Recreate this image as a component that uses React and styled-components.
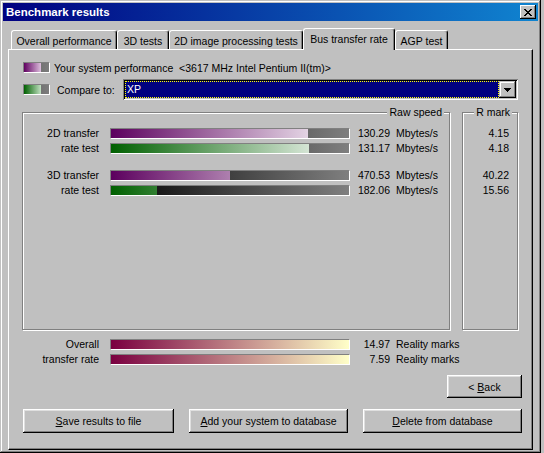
import React from 'react'
import styled, { createGlobalStyle } from 'styled-components'

const Global = createGlobalStyle`
    html, body {
        margin: 0;
        padding: 0;
        background: #c0c0c0;
    }
    body {
        font-family: "Liberation Sans", Arial, sans-serif;
        font-size: 10.5px;
        color: #000;
    }
`;

const Window = styled.div`
    width: 541px;
    height: 453px;
    box-sizing: border-box;
    padding: 3px;
    background: #c0c0c0;
    box-shadow: inset -1px -1px #000, inset 1px 1px #c0c0c0, inset -2px -2px #808080, inset 2px 2px #fff;
    display: flex;
    flex-direction: column;
`;

const TitleBar = styled.div`
    height: 18px;
    display: flex;
    align-items: center;
    justify-content: space-between;
    padding: 0 2px 0 3px;
    background: linear-gradient(to right, #000080, #1084d0);
    color: #fff;
    font-weight: bold;
    font-size: 11.5px;
`;

const CloseBtn = styled.div`
    width: 16px;
    height: 14px;
    box-sizing: border-box;
    background: #c0c0c0;
    box-shadow: inset -1px -1px #000, inset 1px 1px #fff, inset -2px -2px #808080;
    display: flex;
    align-items: center;
    justify-content: center;
    padding-right: 1px;
`;

const Body = styled.div`
    flex: 1;
    display: flex;
    flex-direction: column;
    padding: 7px 5px 0 5px;
`;

const TabStrip = styled.div`
    display: flex;
    align-items: flex-end;
    height: 21px;
    padding-left: 3px;
`;

const Tab = styled.div`
    width: ${p => p.$w}px;
    height: ${p => (p.$active ? 22 : 19)}px;
    margin-bottom: ${p => (p.$active ? -1 : 0)}px;
    position: relative;
    z-index: ${p => (p.$active ? 2 : 0)};
    box-sizing: border-box;
    padding-top: 3px;
    line-height: 15px;
    text-align: center;
    white-space: nowrap;
    background: #c0c0c0;
    border-top: 1px solid #fff;
    border-left: 1px solid #fff;
    border-right: 1px solid #000;
    border-radius: 3px 3px 0 0;
    box-shadow: inset -1px 0 #808080;
`;

const Panel = styled.div`
    flex: 1;
    box-sizing: border-box;
    border-top: 1px solid #fff;
    border-left: 1px solid #fff;
    border-right: 1px solid #000;
    border-bottom: 1px solid #000;
    box-shadow: inset -1px -1px #808080;
    padding: 10px 13px 0 13px;
    display: flex;
    flex-direction: column;
`;

const LegendRow = styled.div`
    display: flex;
    align-items: center;
    height: ${p => p.$h}px;
    margin-top: ${p => p.$top || 0}px;
`;

const Swatch = styled.div`
    width: 27px;
    height: 11px;
    margin-left: 1px;
    box-sizing: border-box;
    border-top: 1px solid #808080;
    border-left: 1px solid #808080;
    border-bottom: 1px solid #fff;
    border-right: 1px solid #fff;
    background: linear-gradient(to right, ${p => p.$from}, ${p => p.$to} 70%, #747474 70%, #7c7c7c);
`;

const LegendText = styled.span`
    margin-left: ${p => p.$gap}px;
    width: ${p => (p.$w ? `${p.$w}px` : 'auto')};
    white-space: pre;
`;

const Combo = styled.div`
    width: 395px;
    height: 21px;
    box-sizing: border-box;
    padding: 2px;
    background: #fff;
    box-shadow: inset 1px 1px #808080, inset -1px -1px #fff, inset 2px 2px #000, inset -2px -2px #c0c0c0;
    display: flex;
`;

const Selection = styled.div`
    flex: 1;
    box-sizing: border-box;
    background: #000080;
    border: 1px dotted #ffff00;
    color: #fff;
    padding-left: 1px;
    line-height: 15px;
`;

const DropBtn = styled.div`
    width: 17px;
    box-sizing: border-box;
    background: #c0c0c0;
    box-shadow: inset -1px -1px #000, inset 1px 1px #c0c0c0, inset -2px -2px #808080, inset 2px 2px #fff;
    display: flex;
    align-items: center;
    justify-content: center;
`;

const Groups = styled.div`
    display: flex;
    margin-top: 12px;
`;

const GroupBox = styled.div`
    position: relative;
    width: ${p => p.$w}px;
    height: 218px;
    box-sizing: border-box;
    margin-left: ${p => p.$left || 0}px;
    border: 1px solid #808080;
    box-shadow: inset 1px 1px #fff, 1px 1px #fff;
    padding: 13px ${p => p.$padRight || 0}px 0 0;
`;

const GroupCaption = styled.span`
    position: absolute;
    top: -7px;
    right: ${p => p.$right}px;
    padding: 0 2px;
    line-height: 13px;
    background: #c0c0c0;
`;

const Row = styled.div`
    display: flex;
    align-items: center;
    height: 15px;
    line-height: 15px;
    margin-top: ${p => p.$top || 0}px;
    justify-content: ${p => (p.$end ? 'flex-end' : 'flex-start')};
`;

const RowLabel = styled.span`
    width: ${p => p.$w}px;
    text-align: right;
    white-space: nowrap;
`;

const Track = styled.div`
    width: 240px;
    height: 11px;
    margin-left: 11px;
    box-sizing: border-box;
    border-top: 1px solid #808080;
    border-left: 1px solid #808080;
    border-bottom: 1px solid #fff;
    border-right: 1px solid #fff;
    background: linear-gradient(to right, #000, #7f7f7f);
    display: flex;
`;

const Fill = styled.div`
    height: 100%;
    background-image: linear-gradient(to right, ${p => p.$from}, ${p => p.$to});
    background-repeat: no-repeat;
`;

const Value = styled.span`
    width: 40px;
    text-align: right;
`;

const Unit = styled.span`
    margin-left: 6px;
    white-space: nowrap;
`;

const Overall = styled.div`
    margin-top: 7px;
`;

const BackRow = styled.div`
    display: flex;
    justify-content: flex-end;
    margin: 8px -3px 0 1px;
`;

const ButtonRow = styled.div`
    display: flex;
    justify-content: space-between;
    margin: 11px -3px 0 1px;
`;

const Button = styled.div`
    width: ${p => p.$w}px;
    height: ${p => p.$h || 23}px;
    box-sizing: border-box;
    background: #c0c0c0;
    box-shadow: inset -1px -1px #000, inset 1px 1px #fff, inset -2px -2px #808080, inset 2px 2px #dfdfdf;
    display: flex;
    align-items: center;
    justify-content: center;
    white-space: pre;
    u {
        text-decoration: underline;
        text-underline-offset: 1px;
    }
`;

const COLORS = {
    purple: ['#5c005e', '#ffffff'],
    green: ['#006000', '#ffffff'],
    overall: ['#7a0040', '#ffffc8'],
};

const Bar = ({ pct, kind }) => {
    const [from, to] = COLORS[kind];
    return (
        <Track>
            <Fill $from={from} $to={to} style={{ width: `${pct}%`, backgroundSize: `${10000 / pct}% 100%` }} />
        </Track>
    );
};

const groups = [
    [
        { label: '2D transfer', pct: 82.8, kind: 'purple', value: '130.29', mark: '4.15' },
        { label: 'rate test', pct: 83.2, kind: 'green', value: '131.17', mark: '4.18' },
    ],
    [
        { label: '3D transfer', pct: 50, kind: 'purple', value: '470.53', mark: '40.22' },
        { label: 'rate test', pct: 19.4, kind: 'green', value: '182.06', mark: '15.56' },
    ],
];

const overall = [
    { label: 'Overall', value: '14.97' },
    { label: 'transfer rate', value: '7.59' },
];

const tabs = [
    { name: 'Overall performance', w: 106 },
    { name: '3D tests', w: 52 },
    { name: '2D image processing tests', w: 134 },
    { name: 'Bus transfer rate', w: 92, active: true },
    { name: 'AGP test', w: 53 },
];

const CloseGlyph = () => (
    <svg width="8" height="7" viewBox="0 0 8 7" shapeRendering="crispEdges">
        <path d="M0 0h2v1h-2zM6 0h2v1h-2zM1 1h2v1h-2zM5 1h2v1h-2zM2 2h4v1h-4zM3 3h2v1h-2zM2 4h4v1h-4zM1 5h2v1h-2zM5 5h2v1h-2zM0 6h2v1h-2zM6 6h2v1h-2z" fill="#000" />
    </svg>
);

const App = () => {
    return (
        <>
            <Global />
            <Window>
                <TitleBar>
                    <span>Benchmark results</span>
                    <CloseBtn><CloseGlyph /></CloseBtn>
                </TitleBar>
                <Body>
                    <TabStrip>
                        {tabs.map(t => (
                            <Tab key={t.name} $w={t.w} $active={t.active}>{t.name}</Tab>
                        ))}
                    </TabStrip>
                    <Panel>
                        <LegendRow $h={15}>
                            <Swatch $from="#600060" $to="#e0c4e0" />
                            <LegendText $gap={4}>{'Your system performance  <3617 MHz Intel Pentium II(tm)>'}</LegendText>
                        </LegendRow>
                        <LegendRow $h={21} $top={4}>
                            <Swatch $from="#006000" $to="#c8e4c8" />
                            <LegendText $gap={7} $w={66}>Compare to:</LegendText>
                            <Combo>
                                <Selection>XP</Selection>
                                <DropBtn>
                                    <svg width="7" height="4" viewBox="0 0 7 4" shapeRendering="crispEdges">
                                        <path d="M0 0h7v1h-7zM1 1h5v1h-5zM2 2h3v1h-3zM3 3h1v1h-1z" fill="#000" />
                                    </svg>
                                </DropBtn>
                            </Combo>
                        </LegendRow>
                        <Groups>
                            <GroupBox $w={428}>
                                <GroupCaption $right={5}>Raw speed</GroupCaption>
                                {groups.map((g, gi) => (
                                    <div key={gi} style={{ marginTop: gi ? 12 : 0 }}>
                                        {g.map((r, ri) => (
                                            <Row key={ri}>
                                                <RowLabel $w={76}>{r.label}</RowLabel>
                                                <Bar pct={r.pct} kind={r.kind} />
                                                <Value>{r.value}</Value>
                                                <Unit>Mbytes/s</Unit>
                                            </Row>
                                        ))}
                                    </div>
                                ))}
                            </GroupBox>
                            <GroupBox $w={56} $left={12} $padRight={8}>
                                <GroupCaption $right={5}>R mark</GroupCaption>
                                {groups.map((g, gi) => (
                                    <div key={gi} style={{ marginTop: gi ? 12 : 0 }}>
                                        {g.map((r, ri) => (
                                            <Row key={ri} $end>{r.mark}</Row>
                                        ))}
                                    </div>
                                ))}
                            </GroupBox>
                        </Groups>
                        <Overall>
                            {overall.map(r => (
                                <Row key={r.label}>
                                    <RowLabel $w={77}>{r.label}</RowLabel>
                                    <Bar pct={100} kind="overall" />
                                    <Value>{r.value}</Value>
                                    <Unit>Reality marks</Unit>
                                </Row>
                            ))}
                        </Overall>
                        <BackRow>
                            <Button $w={75}>{'< '}<u>B</u>ack</Button>
                        </BackRow>
                        <ButtonRow>
                            <Button $w={151} $h={24}><u>S</u>ave results to file</Button>
                            <Button $w={159} $h={24}><u>A</u>dd your system to database</Button>
                            <Button $w={159} $h={24}><u>D</u>elete from database</Button>
                        </ButtonRow>
                    </Panel>
                </Body>
            </Window>
        </>
    );
};

export default App
